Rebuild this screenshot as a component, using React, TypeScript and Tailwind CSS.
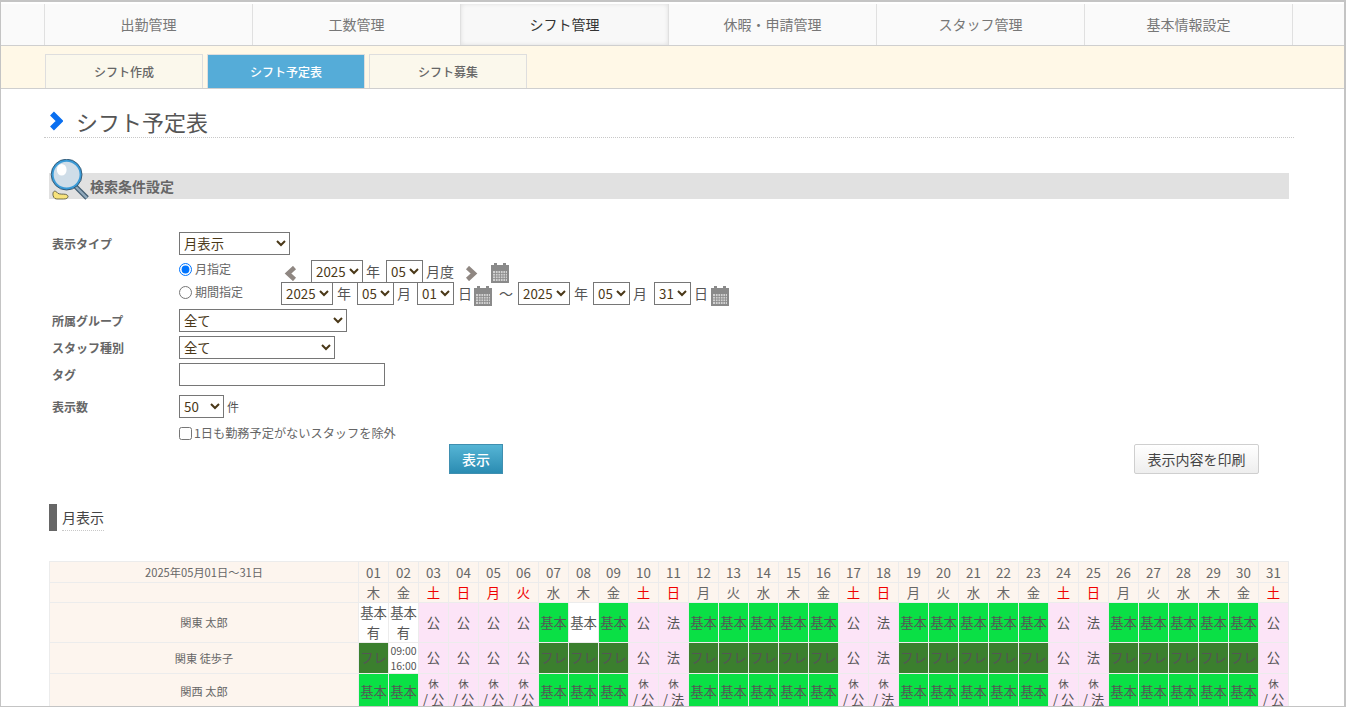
import React from 'react';

const mainTabs = ['出勤管理', '工数管理', 'シフト管理', '休暇・申請管理', 'スタッフ管理', '基本情報設定'];
const subTabs = ['シフト作成', 'シフト予定表', 'シフト募集'];
const week = ['木', '金', '土', '日', '月', '火', '水'];

type Kind = 'kihon' | 'kihonWhite' | 'yu' | 'fure' | 'time' | 'ko' | 'ho' | 'kyuKo' | 'kyuHo';

const days = Array.from({ length: 31 }, (_, i) => i + 1);
const weekend = (d: number) => [3, 4, 10, 11, 17, 18, 24, 25, 31].includes(d);
const sunday = (d: number) => [4, 11, 18, 25].includes(d);

// 5/5 and 5/6 are holidays
const isRed = (d: number) => weekend(d) || d === 5 || d === 6;

const row1 = (d: number): Kind => {
  if (d <= 2) return 'yu';
  if (d === 8) return 'kihonWhite';
  if (d <= 6) return 'ko';
  if (weekend(d)) return sunday(d) ? 'ho' : 'ko';
  return 'kihon';
};
const row2 = (d: number): Kind => {
  if (d === 2) return 'time';
  if (d <= 6 && d > 2) return 'ko';
  if (weekend(d)) return sunday(d) ? 'ho' : 'ko';
  return 'fure';
};
const row3 = (d: number): Kind => {
  if (d > 2 && d <= 6) return 'kyuKo';
  if (weekend(d)) return sunday(d) ? 'kyuHo' : 'kyuKo';
  return 'kihon';
};

const rows: { name: string; h: string; kind: (d: number) => Kind }[] = [
  { name: '関東 太郎', h: 'h-[40px]', kind: row1 },
  { name: '関東 徒歩子', h: 'h-[31px]', kind: row2 },
  { name: '関西 太郎', h: 'h-[36px]', kind: row3 },
];

const Cell: React.FC<{ kind: Kind }> = ({ kind }) => {
  const base = 'border border-[#ececec] p-0 text-center align-middle text-[#555]';
  const normal = `${base} text-[13.33px] leading-[19.5px]`;
  switch (kind) {
    case 'kihon':
      return <td className={`${normal} bg-[#0ae045]`}>基本</td>;
    case 'kihonWhite':
      return <td className={`${normal} bg-white`}>基本</td>;
    case 'yu':
      return (
        <td className={`${normal} bg-white`}>
          基本
          <br />有
        </td>
      );
    case 'fure':
      return <td className={`${normal} bg-[#3b7f2e]`}>フレ</td>;
    case 'time':
      return (
        <td className={`${base} bg-white text-[10.5px] leading-[15px]`}>
          09:00
          <br />
          16:00
        </td>
      );
    case 'ko':
      return <td className={`${normal} bg-[#fce4f7]`}>公</td>;
    case 'ho':
      return <td className={`${normal} bg-[#fce4f7]`}>法</td>;
    default:
      return (
        <td className={`${base} bg-[#fce4f7]`}>
          <div className="text-[10.5px] leading-[15px]">休</div>
          <div className="text-[13.33px] leading-[17px]">/ {kind === 'kyuKo' ? '公' : '法'}</div>
        </td>
      );
  }
};

const Select: React.FC<{ value: string; className: string }> = ({ value, className }) => (
  <select
    defaultValue={value}
    className={`${className} h-[23px] appearance-auto rounded-none border border-[#767676] bg-white text-[13.33px] text-[#4a3818]`}
  >
    <option>{value}</option>
  </select>
);

const Calendar: React.FC<{ className?: string }> = ({ className }) => (
  <svg viewBox="0 0 20 20" className={`h-[20px] w-[20px] shrink-0 ${className ?? ''}`}>
    <rect x="4" y="0" width="3" height="3" fill="#8a8a8a" />
    <rect x="13" y="0" width="3" height="3" fill="#8a8a8a" />
    <rect x="1" y="2" width="18" height="18" fill="#8a8a8a" />
    <rect x="3" y="8" width="14" height="10" fill="#d0d0d0" />
    <path d="M3 10.5H17M3 13H17M3 15.5H17M5.5 8V18M8 8V18M10.5 8V18M13 8V18M15.5 8V18" stroke="#8a8a8a" strokeWidth="0.8" />
  </svg>
);

const Arrow: React.FC<{ flip?: boolean; className?: string }> = ({ flip, className }) => (
  <svg viewBox="0 0 13 15" className={`h-[15px] w-[13px] shrink-0 ${flip ? 'scale-x-[-1]' : ''} ${className ?? ''}`}>
    <polyline points="10.5,1.5 4,7.5 10.5,13.5" fill="none" stroke="#8f8782" strokeWidth="4.5" />
  </svg>
);

const Loupe: React.FC = () => (
  <svg viewBox="0 0 42 42" className="absolute left-[1px] top-[-14px] h-[41px] w-[41px]">
    <path d="M25 27L38 40" stroke="#3f5a6e" strokeWidth="5" />
    <path d="M25 27L38 40" stroke="#8fa8bb" strokeWidth="2.4" />
    <circle cx="17" cy="16" r="14.5" fill="#cfdde8" stroke="#3a9ad6" strokeWidth="2.4" />
    <circle cx="17" cy="16" r="15.8" fill="none" stroke="#24435c" strokeWidth="0.8" />
    <ellipse cx="12" cy="11" rx="5" ry="6" fill="#ffffff" />
    <path d="M3 36C3 33 5 32 7 34C8 36 11 36 14 36C20 36 20 41 14 41H7C4 41 3 38 3 36Z" fill="#f7e27c" stroke="#4a4a30" strokeWidth="0.8" />
  </svg>
);

const Label: React.FC<{ children: React.ReactNode }> = ({ children }) => (
  <div className="w-[130px] shrink-0 pl-[3px] text-[12px] font-bold text-[#666]">{children}</div>
);

const Unit: React.FC<{ className?: string; children: React.ReactNode }> = ({ className, children }) => (
  <span className={`shrink-0 text-[14px] ${className ?? ''}`}>{children}</span>
);

export default function App() {
  return (
    <div className="h-[707px] w-[1346px] overflow-hidden border border-t-[2px] border-r-[2px] border-[#c4c4c4] bg-white font-['Noto_Sans_CJK_JP','Liberation_Sans',sans-serif] text-[#555]">
      <nav className="flex h-[44px] border-t-2 border-b border-t-white border-b-[#cfcfcf] bg-[#fafafa] pl-[43px]">
        {mainTabs.map((t, i) => (
          <div
            key={t}
            className={`flex w-[208px] items-center justify-center border-l border-[#e0e0e0] text-[14px] ${
              i === 2 ? 'bg-[#f8f8f8] text-[#333] shadow-[inset_0_0_4px_#ddd]' : 'text-[#777]'
            }`}
          >
            {t}
          </div>
        ))}
        <div className="w-px bg-[#e0e0e0]" />
      </nav>

      <div className="flex h-[43px] items-end gap-[4px] border-b border-[#cfcfcf] bg-[#fff8e7] pl-[44px]">
        {subTabs.map((t, i) => (
          <div
            key={t}
            className={`flex h-[34px] w-[158px] items-center justify-center border border-b-0 border-[#dedede] text-[12px] font-medium ${
              i === 1 ? 'bg-[#55acd8] text-white' : 'bg-[#fbf8ec] text-[#666]'
            }`}
          >
            {t}
          </div>
        ))}
      </div>

      <main className="pl-[48px] pr-[55px]">
        <div className="mx-[-5px] mt-[16px] flex h-[33px] items-center border-b border-dotted border-[#c8c8c8] pl-[5px]">
          <svg viewBox="0 0 14 20" className="h-[20px] w-[14px] shrink-0">
            <polyline points="3,2.5 10.5,10 3,17.5" fill="none" stroke="#0a6ff0" strokeWidth="5.5" />
          </svg>
          <h1 className="ml-[13px] text-[22px] leading-none text-[#555]">シフト予定表</h1>
        </div>

        <div className="relative mt-[35px] flex h-[26px] items-center bg-[#e1e1e1] pl-[41px] text-[14px] font-bold text-[#666]">
          <Loupe />
          検索条件設定
        </div>

        <div className="mt-[33px] flex flex-col">
          <div className="flex h-[23px] items-center">
            <Label>表示タイプ</Label>
            <Select value="月表示" className="w-[111px]" />
          </div>

          <div className="mt-[5px] flex h-[23px] items-center">
            <div className="w-[130px] shrink-0" />
            <label className="mb-[5px] flex w-[105px] shrink-0 items-center gap-[3px] text-[12px] text-[#666]">
              <input type="radio" defaultChecked name="span" className="m-0 h-[13px] w-[13px]" />
              月指定
            </label>
            <Arrow className="mt-[4px]" />
            <Select value="2025" className="ml-[14px] w-[52px]" />
            <Unit className="ml-[3px] mr-[6px]">年</Unit>
            <Select value="05" className="w-[37px]" />
            <Unit className="ml-[3px]">月度</Unit>
            <Arrow flip className="ml-[11px] mt-[4px]" />
            <Calendar className="ml-[12px] mt-[3px]" />
          </div>

          <div className="mt-[-1px] flex h-[23px] items-center">
            <div className="w-[130px] shrink-0" />
            <label className="mb-[3px] flex w-[102px] shrink-0 items-center gap-[3px] text-[12px] text-[#666]">
              <input type="radio" name="span" className="m-0 h-[13px] w-[13px]" />
              期間指定
            </label>
            <Select value="2025" className="w-[52px]" />
            <Unit className="ml-[4px] mr-[6px]">年</Unit>
            <Select value="05" className="w-[37px]" />
            <Unit className="ml-[3px] mr-[6px]">月</Unit>
            <Select value="01" className="w-[37px]" />
            <Unit className="ml-[4px] mr-[1px]">日</Unit>
            <Calendar className="mt-[5px]" />
            <Unit className="ml-[6px] mr-[5px]">～</Unit>
            <Select value="2025" className="w-[52px]" />
            <Unit className="ml-[4px] mr-[5px]">年</Unit>
            <Select value="05" className="w-[37px]" />
            <Unit className="ml-[3px] mr-[7px]">月</Unit>
            <Select value="31" className="w-[37px]" />
            <Unit className="ml-[3px] mr-[2px]">日</Unit>
            <Calendar className="mt-[5px]" />
          </div>

          <div className="mt-[4px] flex h-[23px] items-center">
            <Label>所属グループ</Label>
            <Select value="全て" className="w-[168px]" />
          </div>
          <div className="mt-[4px] flex h-[23px] items-center">
            <Label>スタッフ種別</Label>
            <Select value="全て" className="w-[156px]" />
          </div>
          <div className="mt-[4px] flex h-[23px] items-center">
            <Label>タグ</Label>
            <input className="h-[23px] w-[206px] border border-[#767676] bg-white" />
          </div>
          <div className="mt-[9px] flex h-[23px] items-center">
            <Label>表示数</Label>
            <Select value="50" className="w-[45px]" />
            <span className="ml-[3px] text-[12px]">件</span>
          </div>
          <div className="mt-[6px] flex h-[18px] items-center">
            <div className="w-[130px] shrink-0" />
            <label className="flex items-center gap-[2px] text-[12.2px] text-[#666]">
              <input type="checkbox" className="m-0 h-[13px] w-[13px]" />
              1日も勤務予定がないスタッフを除外
            </label>
          </div>

          <div className="relative mt-[2px] h-[30px]">
            <button className="absolute left-[400px] top-0 h-[30px] w-[54px] border border-[#3f8fb0] bg-gradient-to-b from-[#55b5d5] to-[#2a8cb2] text-[14px] font-medium text-white">
              表示
            </button>
            <button className="absolute right-[30px] top-0 h-[30px] w-[125px] rounded-[2px] border border-[#cfcfcf] bg-gradient-to-b from-white to-[#eeeeee] text-[14px] text-[#444]">
              表示内容を印刷
            </button>
          </div>
        </div>

        <div className="mt-[30px] flex h-[27px] items-stretch">
          <div className="w-[8px] bg-[#666]" />
          <div className="ml-[5px] flex items-center border-b border-dotted border-[#c8c8c8] text-[14px] text-[#444]">月表示</div>
        </div>

        <table className="mt-[30px] w-[1240px] table-fixed border-collapse">
          <colgroup>
            <col className="w-[309px]" />
            {days.map((d) => (
              <col key={d} className="w-[30px]" />
            ))}
          </colgroup>
          <tbody>
            <tr className="h-[21px] bg-[#fdf5ee]">
              <td className="border border-[#ececec] p-0 text-center text-[11.2px] leading-[19px] text-[#666]">2025年05月01日～31日</td>
              {days.map((d) => (
                <td key={d} className="border border-[#ececec] p-0 text-center text-[13.33px] leading-[19px] text-[#666]">
                  {String(d).padStart(2, '0')}
                </td>
              ))}
            </tr>
            <tr className="h-[20px] bg-[#fdf5ee]">
              <td className="border border-[#ececec] p-0" />
              {days.map((d) => (
                <td key={d} className={`border border-[#ececec] p-0 text-center text-[13.33px] leading-[19px] ${isRed(d) ? 'text-[#f00000]' : 'text-[#666]'}`}>
                  {week[(d - 1) % 7]}
                </td>
              ))}
            </tr>
            {rows.map((r) => (
              <tr key={r.name} className={r.h}>
                <td className="border border-[#ececec] bg-[#fdf5ee] p-0 text-center text-[11.2px] text-[#666]">{r.name}</td>
                {days.map((d) => (
                  <Cell key={d} kind={r.kind(d)} />
                ))}
              </tr>
            ))}
          </tbody>
        </table>
      </main>
    </div>
  );
}
